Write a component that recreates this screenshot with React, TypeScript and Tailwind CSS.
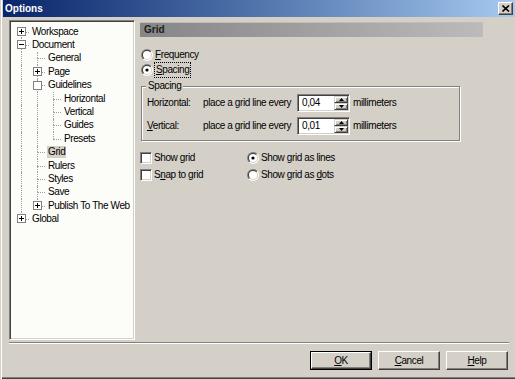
import { useId } from "react";

type Node = { label: string; level: number; box?: "+" | "-" | "o"; sel?: boolean };

const tree: Node[] = [
    { label: "Workspace", level: 0, box: "+" },
    { label: "Document", level: 0, box: "-" },
    { label: "General", level: 1 },
    { label: "Page", level: 1, box: "+" },
    { label: "Guidelines", level: 1, box: "o" },
    { label: "Horizontal", level: 2 },
    { label: "Vertical", level: 2 },
    { label: "Guides", level: 2 },
    { label: "Presets", level: 2 },
    { label: "Grid", level: 1, sel: true },
    { label: "Rulers", level: 1 },
    { label: "Styles", level: 1 },
    { label: "Save", level: 1 },
    { label: "Publish To The Web", level: 1, box: "+" },
    { label: "Global", level: 0, box: "+" },
];

// true when a later row sits on `level` before the tree leaves that branch
const continues = (i: number, level: number) => {
    for (let j = i + 1; j < tree.length; j++) {
        if (tree[j].level < level) return false;
        if (tree[j].level === level) return true;
    }
    return false;
};

const U = ({ children }: { children: React.ReactNode }) => <span className="underline underline-offset-[1px]">{children}</span>;

const Radio = ({ checked }: { checked?: boolean }) => {
    const id = useId();
    return <svg width="12" height="12" viewBox="0 0 12 12" className="shrink-0">
        <defs>
            <linearGradient id={id + "a"} x1="0" y1="0" x2="1" y2="1">
                <stop offset="0.5" stopColor="#808080" />
                <stop offset="0.5" stopColor="#ffffff" />
            </linearGradient>
            <linearGradient id={id + "b"} x1="0" y1="0" x2="1" y2="1">
                <stop offset="0.5" stopColor="#404040" />
                <stop offset="0.5" stopColor="#d4d0c8" />
            </linearGradient>
        </defs>
        <circle cx="6" cy="6" r="6" fill={`url(#${id}a)`} />
        <circle cx="6" cy="6" r="5" fill={`url(#${id}b)`} />
        <circle cx="6" cy="6" r="4" fill="#ffffff" />
        {checked && <circle cx="6" cy="6" r="1.6" fill="#000000" />}
    </svg>
}

const Check = () => <div className="w-[12px] h-[12px] shrink-0 bg-white border border-t-[#808080] border-l-[#808080] border-b-white border-r-white shadow-[inset_1px_1px_0_#404040,inset_-1px_-1px_0_#d4d0c8]" />

const Button = ({ children, isDefault }: { children: React.ReactNode, isDefault?: boolean }) =>
    <div className={`w-[62px] h-[19px] ${isDefault ? "border border-black" : ""}`}>
        <div className="w-full h-full flex items-center justify-center border border-t-white border-l-white border-b-[#404040] border-r-[#404040] shadow-[inset_-1px_-1px_0_#808080,inset_1px_1px_0_#d4d0c8]">
            {children}
        </div>
    </div>

const SpinBtn = ({ up }: { up?: boolean }) =>
    <div className="flex-1 flex items-center justify-center bg-[#d4d0c8] border border-t-[#d4d0c8] border-l-[#d4d0c8] border-b-[#404040] border-r-[#404040] shadow-[inset_1px_1px_0_#fff,inset_-1px_-1px_0_#808080]">
        <svg width="5" height="3" viewBox="0 0 5 3">
            <path d={up ? "M2.5 0L5 3H0z" : "M0 0H5L2.5 3z"} fill="#000" />
        </svg>
    </div>

const Field = ({ value }: { value: string }) =>
    <div className="w-[53px] h-[18px] flex bg-white border border-t-[#808080] border-l-[#808080] border-b-white border-r-white shadow-[inset_1px_1px_0_#404040,inset_-1px_-1px_0_#d4d0c8] p-[1px]">
        <div className="flex-1 flex items-center pl-[3px]">{value}</div>
        <div className="w-[14px] flex flex-col">
            <SpinBtn up />
            <SpinBtn />
        </div>
    </div>

const TreeRow = ({ node, i }: { node: Node, i: number }) => {
    const next = continues(i, node.level);
    return <div className="flex items-center h-[13.4px]">
        {Array.from({ length: node.level }).map((_, l) =>
            <div key={l} className="w-[16px] h-full flex justify-center">
                {continues(i, l) && <div className="h-full border-l border-dotted border-[#a0a0a0]" />}
            </div>
        )}
        <div className="relative w-[16px] h-full flex flex-col items-center">
            <div className={`flex-1 border-l border-dotted ${i === 0 ? "border-transparent" : "border-[#a0a0a0]"}`} />
            <div className={`flex-1 border-l border-dotted ${next ? "border-[#a0a0a0]" : "border-transparent"}`} />
            <div className="absolute left-1/2 right-0 top-1/2 border-t border-dotted border-[#a0a0a0]" />
            {node.box && <div className="absolute left-[4px] top-[2px] w-[9px] h-[9px] bg-white border border-[#808080] flex items-center justify-center">
                {node.box !== "o" && <div className="relative w-[5px] h-px bg-black">
                    {node.box === "+" && <div className="absolute left-[2px] -top-[2px] w-px h-[5px] bg-black" />}
                </div>}
            </div>}
        </div>
        <span className={`ml-[2px] px-[1px] py-[1px] whitespace-nowrap ${node.sel ? "bg-[#d4d0c8]" : ""}`}>{node.label}</span>
    </div>
}

export default function App() {
    return <div className="w-[515px] h-[379px] bg-[#d4d0c8] flex flex-col overflow-hidden font-['Liberation_Sans',Arial,sans-serif] text-[10px] tracking-[-0.4px] leading-none text-black shadow-[inset_1px_0_0_#d4d0c8,inset_2px_0_0_#ffffff,inset_0_-1px_0_#404040,inset_0_-2px_0_#808080]">
        {/* title bar */}
        <div className="ml-[3px] h-[17px] shrink-0 flex items-center bg-linear-to-r from-[#0a246a] to-[#a6caf0]">
            <span className="pl-[2px] text-white font-bold tracking-normal text-[10px]">Options</span>
            <div className="ml-auto mr-[2px] w-[15px] h-[13px] flex items-center justify-center bg-[#d4d0c8] border border-t-white border-l-white border-b-[#404040] border-r-[#404040] shadow-[inset_-1px_-1px_0_#808080]">
                <svg width="8" height="7" viewBox="0 0 8 7">
                    <path d="M0.5 0.5L7 6.5M7 0.5L0.5 6.5" stroke="#000" strokeWidth="1.6" />
                </svg>
            </div>
        </div>

        <div className="flex mt-[3px]">
            {/* tree */}
            <div className="ml-[9px] w-[126px] h-[320px] shrink-0 bg-[#fcfcf9] border border-t-[#808080] border-l-[#808080] border-b-white border-r-white shadow-[inset_1px_1px_0_#404040,inset_-1px_-1px_0_#d4d0c8] pt-[4px] pl-[3px]">
                {tree.map((n, i) => <TreeRow key={n.label} node={n} i={i} />)}
            </div>

            {/* page */}
            <div className="ml-[5px] flex flex-col">
                <div className="mt-[2px] w-[343px] h-[15px] flex items-center pl-[4px] bg-linear-to-r from-[#868686] to-[#bbbbbb] border-t border-[#bdbdbd] font-bold tracking-normal text-[#202020]">Grid</div>

                <div className="mt-[10px] ml-[1px] h-[15px] flex items-center gap-[2px]">
                    <Radio />
                    <span><U>F</U>requency</span>
                </div>
                <div className="ml-[1px] h-[15px] flex items-center gap-[1px]">
                    <Radio checked />
                    <span className="px-[1px] py-[2px] border border-dotted border-black"><U>S</U>pacing</span>
                </div>

                <div className="relative mt-[9px] ml-[1px] w-[319px] h-[55px] border border-[#808080] shadow-[inset_1px_1px_0_#fff,1px_1px_0_#fff] pt-[7px] pl-[5px] flex flex-col gap-[5px]">
                    <span className="absolute left-[4px] -top-[6px] px-[2px] bg-[#d4d0c8]">Spacing</span>
                    <div className="flex items-center h-[18px]">
                        <span className="w-[56px]">Horizontal:</span>
                        <span className="w-[94px]">place a grid line every</span>
                        <Field value="0,04" />
                        <span className="ml-[3px]">millimeters</span>
                    </div>
                    <div className="flex items-center h-[18px]">
                        <span className="w-[56px]"><U>V</U>ertical:</span>
                        <span className="w-[94px]">place a grid line every</span>
                        <Field value="0,01" />
                        <span className="ml-[3px]">millimeters</span>
                    </div>
                </div>

                <div className="mt-[8px] grid grid-cols-[107px_1fr]">
                    <div className="h-[17px] flex items-center gap-[2px]"><Check /><span>Show grid</span></div>
                    <div className="h-[17px] flex items-center gap-[2px]"><Radio checked /><span>Show grid as lines</span></div>
                    <div className="h-[17px] flex items-center gap-[2px]"><Check /><span>S<U>n</U>ap to grid</span></div>
                    <div className="h-[17px] flex items-center gap-[2px]"><Radio /><span>Show grid as <U>d</U>ots</span></div>
                </div>
            </div>
        </div>

        <div className="mt-[2px] ml-[9px] w-[500px] h-[2px] border-t border-[#808080] border-b border-b-white" />

        <div className="mt-[7px] flex justify-end gap-[6px] pr-[7px]">
            <Button isDefault><span><U>O</U>K</span></Button>
            <Button><span><U>C</U>ancel</span></Button>
            <Button><span><U>H</U>elp</span></Button>
        </div>
    </div>
}
